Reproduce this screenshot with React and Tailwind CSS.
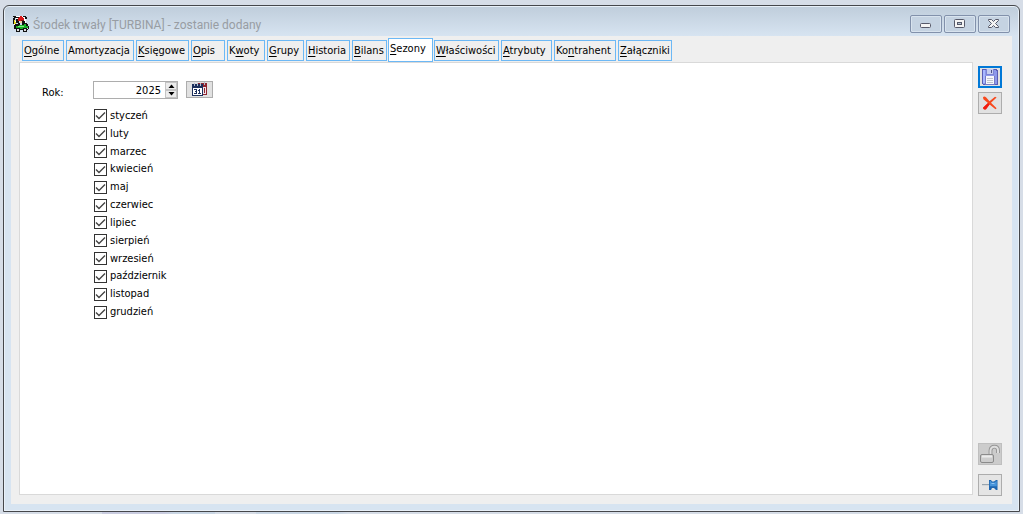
import { useState } from 'react';

const TABS = [
  { pre: '', key: 'O', post: 'gólne', width: 'w-[42px]' },
  { pre: '', key: 'A', post: 'mortyzacja', width: 'w-[68px]', plain: true },
  { pre: '', key: 'K', post: 'sięgowe', width: 'w-[53px]' },
  { pre: '', key: 'O', post: 'pis', width: 'w-[34px]' },
  { pre: 'K', key: 'w', post: 'oty', width: 'w-[38px]' },
  { pre: '', key: 'G', post: 'rupy', width: 'w-[37px]' },
  { pre: '', key: 'H', post: 'istoria', width: 'w-[44px]' },
  { pre: '', key: 'B', post: 'ilans', width: 'w-[35px]' },
  { pre: '', key: 'S', post: 'ezony', width: 'w-[45px]' },
  { pre: '', key: 'W', post: 'łaściwości', width: 'w-[65px]' },
  { pre: '', key: 'A', post: 'trybuty', width: 'w-[51px]' },
  { pre: 'Ko', key: 'n', post: 'trahent', width: 'w-[62px]' },
  { pre: '', key: 'Z', post: 'ałączniki', width: 'w-[54px]' },
];

const MONTHS = [
  'styczeń', 'luty', 'marzec', 'kwiecień', 'maj', 'czerwiec',
  'lipiec', 'sierpień', 'wrzesień', 'październik', 'listopad', 'grudzień',
];

function AppIcon() {
  return (
    <svg width="16" height="16" viewBox="0 0 16 16" shapeRendering="crispEdges" aria-hidden="true">
      <path fill="#fff" d="M3 0h10v5H3zM1 5h2v4H1zM11 4h2v4h-2z" />
      <path fill="#111" d="M0 0h3v1H0zM1 1h3v1H1zM0 2h2v2H0zM4 1h2v1H4zM10 0h3v1h-3zM12 1h2v2h-2zM0 3h1v5H0zM3 3h2v4H3zM4 5h2v2H4zM2 8h3v2H2zM9 5h3v4H9zM5 7h2v3H5zM12 7h2v1h-2zM13 8h2v2h-2zM15 10h1v3h-1zM1 9h2v4H1zM3 13h12v1H3zM3 12h4v4H3zM10 12h4v4h-4z" />
      <path fill="#d81818" d="M7 0h2v1H7zM6 1h4v1H6zM5 2h6v2H5zM5 4h4v1H5z" />
      <path fill="#7a1010" d="M8 4h3v1H8z" />
      <path fill="#e8d820" d="M1 4h1v4H1zM2 6h1v2H2z" />
      <path fill="#f2c9a0" d="M7 5h2v2H7z" />
      <path fill="#18b028" d="M3 10h12v2H3zM6 9h5v1H6zM11 8h2v2h-2zM7 12h3v1H7z" />
      <path fill="#7cf07c" d="M5 10h6v1H5z" />
      <path fill="#ddd" d="M4 13h2v2H4zM11 13h2v2h-2z" />
    </svg>
  );
}

function CalendarIcon() {
  return (
    <svg width="16" height="15" viewBox="0 0 16 15" shapeRendering="crispEdges" aria-hidden="true">
      <path fill="#8e2530" d="M6 1h9v12H6z" />
      <path fill="#f0e4e8" d="M11 5h3v7h-3z" />
      <path fill="#8e2530" d="M12 6h1v5h-1z" />
      <path fill="#1c2f5c" d="M0 2h11v12H0z" />
      <path fill="#fff" d="M1 6h9v7H1z" />
      <path fill="#b4bccd" d="M2 1h1v3H2zM5 1h1v3H5zM8 1h1v3H8zM12 0h1v3h-1z" />
      <path fill="#1c2f5c" d="M2 7h3v1H2zM4 8h1v1H4zM3 9h2v1H3zM4 10h1v1H4zM2 11h3v1H2zM7 7h1v5H7zM6 8h1v1H6zM6 11h3v1H6z" />
    </svg>
  );
}

function FloppyIcon() {
  return (
    <svg width="16" height="16" viewBox="0 0 16 16" shapeRendering="crispEdges" aria-hidden="true">
      <path fill="#5a5cb4" d="M0 0h15v1h1v15H1v-1H0z" />
      <path fill="#8d98ea" d="M1 1h13v1h1v13H1z" />
      <path fill="#a9b8ff" d="M1 1h2v13H1z" />
      <path fill="#7c84d4" d="M4 0h8v6H4z" />
      <path fill="#c6cdf0" d="M5 0h6v5H5z" />
      <path fill="#4d5188" d="M9 1h1v3H9z" />
      <path fill="#777ac4" d="M3 7h10v9H3z" />
      <path fill="#f6f7fc" d="M4 7h8v8H4z" />
      <path fill="#c0c2cc" d="M5 9h6v1H5zM5 11h6v1H5zM5 13h6v1H5z" />
    </svg>
  );
}

function DeleteIcon() {
  return (
    <svg width="16" height="16" viewBox="0 0 16 16" aria-hidden="true">
      <path fill="#f8481c" d="M1 2.200Q2.200 0.800 4 2.200L7.500 6.200 13 1.800 14.600 2.400 9 7.800 14.600 13.200 13.500 14.200 7.600 9.500 4 14.200Q1.500 15.400 1 12.800L6 8 1.400 4.200Z" />
      <path fill="#f11c10" d="M6 8 7.600 9.500 4 14.200Q1.500 15.400 1 12.800Z" />
    </svg>
  );
}

function UnlockIcon() {
  return (
    <svg width="20" height="20" viewBox="0 0 20 20" aria-hidden="true">
      <path fill="none" stroke="#959595" strokeWidth="3.800" d="M10.500 11V6.500Q10.800 2.700 14.500 2.700Q18 2.700 18 6.500V9" />
      <path fill="none" stroke="#dedede" strokeWidth="2" d="M10.500 11V6.500Q10.800 2.700 14.500 2.700Q18 2.700 18 6.500V9" />
      <rect x="0.500" y="10.500" width="13" height="8" rx="1.500" fill="#cdcdcd" stroke="#8b8b8b" />
      <path stroke="#ececec" strokeWidth="2" d="M2 12.500h10" />
    </svg>
  );
}

function PinIcon() {
  return (
    <svg width="16" height="12" viewBox="0 0 16 12" aria-hidden="true">
      <path fill="#98a4ae" d="M0 5h7v1.200H0z" />
      <path fill="#1f66b0" d="M7 1h2l1 1.500h2L14 1h1.500v10H14l-2-2h-2l-1 2H7Z" />
      <path fill="#4794da" d="M7.800 2h1l.8 1.500h3L14 2.200h.8v5H7.800Z" />
      <path fill="#93c4f0" d="M9.500 4h3v1h-3z" />
    </svg>
  );
}

function MinimizeIcon() {
  return (
    <svg width="12" height="10" viewBox="0 0 12 10" aria-hidden="true">
      <rect x="0.500" y="4.500" width="10" height="4" rx="1" fill="#f4f4f4" stroke="#565969" />
    </svg>
  );
}

function RestoreIcon() {
  return (
    <svg width="12" height="10" viewBox="0 0 12 10" aria-hidden="true">
      <rect x="0.500" y="0.500" width="10" height="8" rx="1" fill="#f4f4f4" stroke="#565969" />
      <rect x="3.500" y="3.500" width="4" height="2" fill="#b5c3d4" stroke="#565969" />
    </svg>
  );
}

function CloseIcon() {
  return (
    <svg width="12" height="10" viewBox="0 0 12 10" aria-hidden="true">
      <path fill="#f4f4f4" stroke="#565969" strokeLinejoin="round" d="M0.500 0.500H3.500L5.500 2.500 7.500 0.500H10.500V1.500L7.500 4.500 10.500 7.500V8.500H7.500L5.500 6.500 3.500 8.500H0.500V7.500L3.500 4.500 0.500 1.500Z" />
    </svg>
  );
}

function CaptionButton({ label, children }) {
  return (
    <button
      type="button"
      aria-label={label}
      className="flex h-[18px] w-8 items-center justify-center rounded-xs border border-[#8291ab] bg-[#c5d3e2] shadow-[inset_0_0_0_1px_#d8e3ee]"
    >
      {children}
    </button>
  );
}

function ToolButton({ label, className, children }) {
  return (
    <button type="button" aria-label={label} className={`flex h-[22px] w-6 items-center justify-center ${className}`}>
      {children}
    </button>
  );
}

function Month({ name }) {
  return (
    <label className="flex items-center gap-[3px]">
      <span className="grid size-[13px] shrink-0">
        <input
          type="checkbox"
          defaultChecked
          className="peer col-start-1 row-start-1 size-[13px] appearance-none border border-[#333] bg-white"
        />
        <svg
          viewBox="0 0 13 13"
          className="pointer-events-none invisible col-start-1 row-start-1 size-[13px] peer-checked:visible"
          aria-hidden="true"
        >
          <path d="M2 6.500 5 9.500 11 3.500" fill="none" stroke="#444" strokeWidth="1.400" />
        </svg>
      </span>
      {name}
    </label>
  );
}

export default function App() {
  const [year, setYear] = useState(2025);
  const [active, setActive] = useState(8);

  return (
    <div className="flex min-h-screen flex-col bg-[#d6dde7] pt-[5px] font-['DejaVu_Sans_Condensed','DejaVu_Sans',sans-serif] text-[11px] leading-[14px] text-black">
      <div className="mx-[3px] flex flex-1 flex-col rounded-t-md border border-[#45474b] bg-[#d7e4f1] bg-linear-to-b from-[#bfcddb] to-[#d7e4f1] to-[30px] px-[7px] pb-[7px] shadow-[inset_0_0_0_1px_#e8f0f8]">
        <header className="flex h-[30px] shrink-0 items-center gap-1 px-0.5 pt-1.5">
          <AppIcon />
          <h1 className="flex-1 pt-0.5 font-[Roboto,'Noto_Sans',sans-serif] text-[12px] leading-4 text-[#989da3]">
            Środek trwały [TURBINA] - zostanie dodany
          </h1>
          <div className="flex gap-0.5">
            <CaptionButton label="Minimalizuj"><MinimizeIcon /></CaptionButton>
            <CaptionButton label="Przywróć"><RestoreIcon /></CaptionButton>
            <CaptionButton label="Zamknij"><CloseIcon /></CaptionButton>
          </div>
        </header>

        <div className="flex flex-1 gap-[5px] bg-[#efefef] pr-2.5 pl-2">
          <main className="flex flex-1 flex-col pb-[9px]">
            <div role="tablist" className="flex h-[26px] items-end gap-0.5 pl-[3px]">
              {TABS.map((tab, i) => (
                <button
                  key={tab.pre + tab.key + tab.post}
                  type="button"
                  role="tab"
                  aria-selected={i === active}
                  onClick={() => setActive(i)}
                  className={`flex shrink-0 justify-start border border-[#6cb8f5] pl-px whitespace-nowrap ${tab.width} ${
                    i === active ? '-mx-px h-6 bg-white pt-[3px]' : 'mb-px h-[21px] pt-[3px]'
                  }`}
                >
                  <span>
                    {tab.pre}
                    <span className={tab.plain ? '' : 'underline underline-offset-2'}>{tab.key}</span>
                    {tab.post}
                  </span>
                </button>
              ))}
            </div>

            <section role="tabpanel" className="flex flex-1 items-start border border-[#d9d9d9] bg-white pt-[18px] pl-[22px]">
              <label htmlFor="year" className="w-[51px] pt-[5px]">Rok:</label>
              <div className="flex flex-col gap-2">
                <div className="flex gap-2">
                  <div className="flex h-[18px] w-[85px] border border-[#adadad]">
                    <input
                      id="year"
                      type="text"
                      inputMode="numeric"
                      value={year}
                      onChange={(e) => setYear(Number(e.target.value) || 0)}
                      className="min-w-0 flex-1 pt-px pr-1 text-right outline-none"
                    />
                    <div className="flex w-3 flex-col">
                      <button type="button" aria-label="Następny rok" onClick={() => setYear(year + 1)} className="flex flex-1 items-center justify-center border border-[#c4c4c4] bg-[#ececec]">
                        <svg width="7" height="4" viewBox="0 0 7 4"><path d="M0.500 4 3.500 0.500 6.500 4Z" /></svg>
                      </button>
                      <button type="button" aria-label="Poprzedni rok" onClick={() => setYear(year - 1)} className="flex flex-1 items-center justify-center border border-[#c4c4c4] bg-[#ececec]">
                        <svg width="7" height="4" viewBox="0 0 7 4"><path d="M0.500 0H6.500L3.500 3.500Z" /></svg>
                      </button>
                    </div>
                  </div>
                  <button type="button" aria-label="Kalendarz" className="flex h-[17px] w-[27px] items-center justify-center border border-[#adadad] bg-[#e1e1e1]">
                    <CalendarIcon />
                  </button>
                </div>
                <div className="grid h-[214px] grid-rows-12 pl-px">
                  {MONTHS.map((name) => (
                    <Month key={name} name={name} />
                  ))}
                </div>
              </div>
            </section>
          </main>

          <aside className="flex flex-col gap-1 pt-[30px] pb-2">
            <ToolButton label="Zapisz" className="border-2 border-[#0078d7] bg-[#e1e1e1]"><FloppyIcon /></ToolButton>
            <ToolButton label="Usuń" className="border border-[#adadad] bg-[#e1e1e1]"><DeleteIcon /></ToolButton>
            <ToolButton label="Odblokuj" className="mt-auto mb-[5px] border border-[#bfbfbf] bg-[#cccccc]"><UnlockIcon /></ToolButton>
            <ToolButton label="Przypnij" className="border border-[#adadad] bg-[#e5e5e5]"><PinIcon /></ToolButton>
          </aside>
        </div>
      </div>
      <div className="h-0.5 bg-[linear-gradient(to_right,#d6dde7_10%,#c9cce0_10%,#c9cce0_16%,#c9d6e4_17%,#c9d6e4_21%,#d6dde7_21%,#d6dde7_25%,#c9d6e4_25%,#c9d6e4_33%,#d6dde7_34%)]" />
    </div>
  );
}
